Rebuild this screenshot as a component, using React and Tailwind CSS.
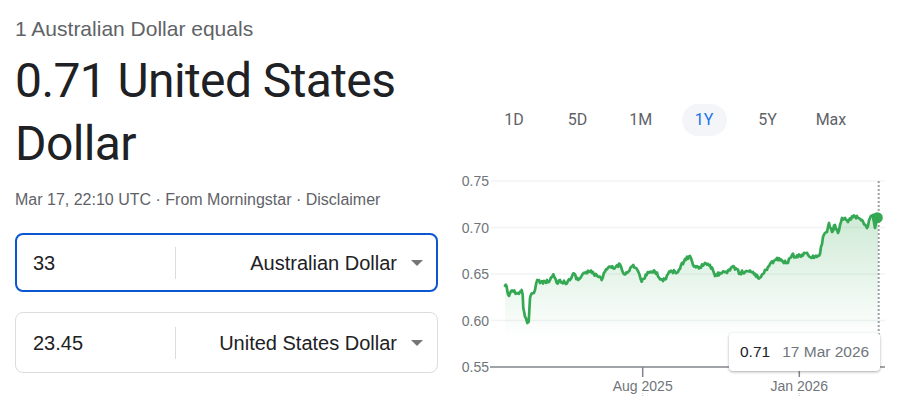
import React from "react";

const KEY = [[505,285.7],[506.7,286.7],[508.3,295],[510,293.3],[513.3,291.7],[516.7,293.3],[520,291.7],[521.7,290],[522.7,295],[523.3,308],[525,316.7],[527.3,323],[528.7,321.7],[530,298],[531.7,293.3],[535,290],[537.3,280],[540,283],[545,281.7],[550,280],[553.3,274.3],[556.7,283],[560,280],[565,283],[570,280],[573.3,273.3],[578.3,280],[583.3,273.3],[590,271.7],[596.7,275],[601.7,280],[605,271.7],[610,266.7],[613.3,268.3],[620,264.3],[623.3,273.3],[628.3,271.7],[633.3,265],[638.3,271.7],[641.7,281.7],[646.7,275],[650,271.7],[655,272],[663,281],[670,272],[678,272],[685,259],[690,256],[693,265],[700,267],[705,263],[710,265],[715,276],[720,273],[727,273],[733,266],[740,273],[747,271],[753,272],[758,278],[763,274],[770,264],[777,258],[783,262],[787,263],[792,255],[798,257],[805,253],[810,257],[817,257],[820,254],[823,237],[827,232],[829,223],[832,232],[835,225],[838,233],[842,218],[845,218],[848,222],[853,217],[858,218],[862,220],[867,228],[870,218],[873,215],[875,228],[878,218]];

function buildLine() {
  let s = 12345;
  const rand = () => {
    s = (s * 16807) % 2147483647;
    return s / 2147483647;
  };
  const out = [];
  for (let i = 0; i < KEY.length - 1; i++) {
    const [x0, y0] = KEY[i];
    const [x1, y1] = KEY[i + 1];
    const steps = Math.max(1, Math.round((x1 - x0) / 1.0));
    for (let k = 0; k < steps; k++) {
      const t = k / steps;
      const x = x0 + (x1 - x0) * t;
      let y = y0 + (y1 - y0) * t;
      if (k > 0) y += (rand() - 0.5) * 3.8;
      out.push([x, y]);
    }
  }
  out.push(KEY[KEY.length - 1]);
  return out;
}

const LINE = buildLine();
const LINE_D = LINE.map((p, i) => (i ? "L" : "M") + p[0].toFixed(1) + " " + p[1].toFixed(1)).join(" ");
const AREA_D = LINE_D + " L878 367 L505 367 Z";

const GRID = [
  { y: 181, label: "0.75" },
  { y: 227.5, label: "0.70" },
  { y: 274, label: "0.65" },
  { y: 320.5, label: "0.60" },
];

function Caret() {
  return (
    <svg width="12" height="6" viewBox="0 0 12 6" className="shrink-0">
      <path d="M0 0 L12 0 L6 6 Z" fill="#757575" />
    </svg>
  );
}

function Box({ value, currency, active }) {
  return (
    <div
      className={
        active
          ? "flex items-center h-[59px] w-[423px] rounded-[8px] border-2 border-[#0b57d0]"
          : "flex items-center h-[61px] w-[423px] rounded-[8px] border border-[#dadce0] px-px"
      }
    >
      <div className="w-[158px] pl-[16px] text-[20px] text-[#202124] leading-[24px] shrink-0">{value}</div>
      <div className="w-px h-[32px] bg-[#dadce0] shrink-0" />
      <div className="flex-1 flex items-center justify-end gap-[14px] pr-[13px] text-[20px] text-[#202124] leading-[24px]">
        <span>{currency}</span>
        <Caret />
      </div>
    </div>
  );
}

export default function App() {
  const tabs = ["1D", "5D", "1M", "1Y", "5Y", "Max"];
  return (
    <div className="w-[901px] h-[415px] bg-white flex overflow-hidden font-['Liberation_Sans',Arial,sans-serif]">
      <div className="w-[450px] shrink-0 pl-[15px] pt-[17px]">
        <div className="text-[21px] leading-[24px] text-[#5f6368]">1 Australian Dollar equals</div>
        <div className="mt-[8px] text-[48px] leading-[63px] text-[#202124] tracking-[-0.6px] font-['Roboto',sans-serif]">
          0.71 United States
          <br />
          Dollar
        </div>
        <div className="mt-[15px] text-[16px] leading-[20px] text-[#5f6368]">
          Mar 17, 22:10 UTC · From Morningstar · Disclaimer
        </div>
        <div className="mt-[23px] flex flex-col gap-[20px]">
          <Box value="33" currency="Australian Dollar" active />
          <Box value="23.45" currency="United States Dollar" />
        </div>
      </div>
      <div className="relative flex-1 pt-[104px]">
        <div className="flex items-center gap-[18.4px] pl-[41.5px] h-[32px]">
          {tabs.map((t) => (
            <div
              key={t}
              className={
                t === "1Y"
                  ? "w-[45px] h-[32px] rounded-full bg-[#f3f5f8] flex items-center justify-center text-[16px] text-[#1a73e8] font-['Roboto',sans-serif]"
                  : "w-[45px] h-[32px] rounded-full flex items-center justify-center text-[16px] text-[#5f6368] font-['Roboto',sans-serif]"
              }
            >
              {t}
            </div>
          ))}
        </div>
        <svg width="451" height="240" viewBox="450 165 451 240" className="mt-[29px] block">
          <defs>
            <linearGradient id="g" gradientUnits="userSpaceOnUse" x1="0" y1="215" x2="0" y2="338">
              <stop offset="0" stopColor="#34a853" stopOpacity="0.24" />
              <stop offset="1" stopColor="#34a853" stopOpacity="0" />
            </linearGradient>
          </defs>
          {GRID.map((g) => (
            <g key={g.label}>
              <line x1="491" x2="885" y1={g.y} y2={g.y} stroke="#f1f3f4" strokeWidth="1.5" />
              <text x="489" y={g.y + 5} textAnchor="end" fontSize="14" fill="#70757a" fontFamily="Liberation Sans, Arial, sans-serif">
                {g.label}
              </text>
            </g>
          ))}
          <text x="489" y="372" textAnchor="end" fontSize="14" fill="#70757a" fontFamily="Liberation Sans, Arial, sans-serif">
            0.55
          </text>
          <path d={AREA_D} fill="url(#g)" />
          <line x1="878.7" x2="878.7" y1="181" y2="367" stroke="#9aa0a6" strokeWidth="2" strokeDasharray="2 2" />
          <path d={LINE_D} fill="none" stroke="#34a853" strokeWidth="2.7" strokeLinejoin="round" strokeLinecap="round" />
          <circle cx="877.3" cy="217.7" r="5.5" fill="#34a853" />
          <line x1="490" x2="885" y1="367" y2="367" stroke="#80868b" strokeWidth="1.5" />
          {[
            { x: 642.7, label: "Aug 2025" },
            { x: 799.3, label: "Jan 2026" },
          ].map((t) => (
            <g key={t.label}>
              <line x1={t.x} x2={t.x} y1="367" y2="377" stroke="#80868b" strokeWidth="1.5" />
              <text x={t.x} y="391" textAnchor="middle" fontSize="14" fill="#70757a" fontFamily="Liberation Sans, Arial, sans-serif">
                {t.label}
              </text>
              <line x1={t.x} x2={t.x} y1="393" y2="396" stroke="#c4c7c5" strokeWidth="1" strokeDasharray="1 1" />
            </g>
          ))}
        </svg>
        <div className="absolute left-[279px] top-[333px] w-[151px] h-[38px] bg-white rounded-[4px] shadow-[0_1px_3px_rgba(60,64,67,0.3),0_1px_2px_rgba(60,64,67,0.15)] flex items-center pl-[11px] gap-[12px] text-[15.5px] leading-[20px]">
          <span className="text-[#202124]">0.71</span>
          <span className="text-[#70757a]">17 Mar 2026</span>
        </div>
      </div>
    </div>
  );
}
